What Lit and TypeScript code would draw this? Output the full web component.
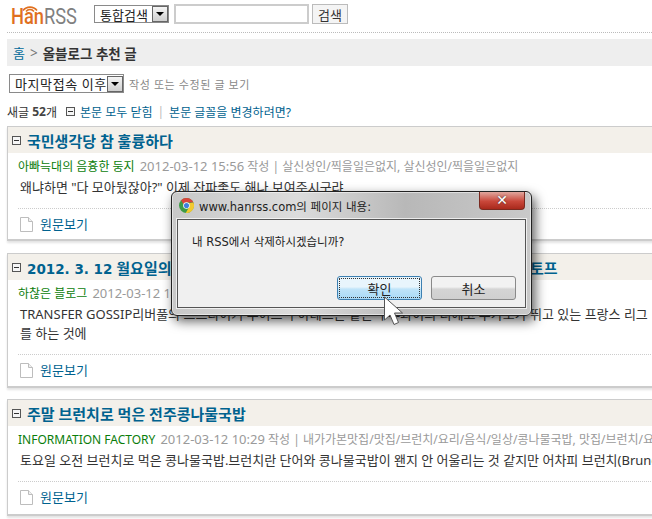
import { LitElement, html, css, svg } from "lit";
import { customElement } from "lit/decorators.js";

interface Post {
  lead?: string;
  title: string;
  src: string;
  date: string;
  tags: string;
  body: string[];
}

const POSTS: Post[] = [
  {
    title: "국민생각당 참 훌륭하다",
    src: "아빠늑대의 음흉한 둥지",
    date: "2012-03-12 15:56",
    tags: "살신성인/찍을일은없지, 살신성인/찍을일은없지",
    body: ['왜냐하면 "다 모아뒀잖아?" 이제 잔파좋도 해나 보여주시구랴'],
  },
  {
    lead: "2012. 3. 12",
    title: " 월요일의 해외축구 이적시장 소식 맨체스 리버풀 스트라이커 크리스토프",
    src: "하찮은 블로그",
    date: "2012-03-12 14:20",
    tags: "축구/해외축구, 축구",
    body: [
      "TRANSFER GOSSIP리버풀의 스트다이커 루이스 수아레스는 같은 우루과이의 디에고 루가노가 뛰고 있는 프랑스 리그",
      "를 하는 것에",
    ],
  },
  {
    title: "주말 브런치로 먹은 전주콩나물국밥",
    src: "INFORMATION FACTORY",
    date: "2012-03-12 10:29",
    tags: "내가가본맛집/맛집/브런치/요리/음식/일상/콩나물국밥, 맛집/브런치/요리",
    body: ["토요일 오전 브런치로 먹은 콩나물국밥.브런치란 단어와 콩나물국밥이 왠지 안 어울리는 것 같지만 어차피 브런치(Brunch)는"],
  },
];

const arrowBtn = html`<span class="arrow"><i></i></span>`;

const docIcon = svg`<svg class="doc" width="13" height="15" viewBox="0 0 13 15"><path d="M.5.5h8l4 4v10H.5z" fill="#fff" stroke="#bdbdbd"/><path d="M8.5.5v4h4" fill="#f0f0f0" stroke="#bdbdbd"/></svg>`;

const chrome = svg`<svg width="15" height="15" viewBox="0 0 20 20"><circle cx="10" cy="10" r="10" fill="#3d9b45"/><path d="M10 0a10 10 0 0 1 9.2 6H10a4 4 0 0 0-3.8 2.8L2.7 3A10 10 0 0 1 10 0z" fill="#d9453b"/><path d="M19.2 6A10 10 0 0 1 9 20l4.2-7.5A4 4 0 0 0 13 7z" fill="#f2c92f"/><circle cx="10" cy="10" r="4.4" fill="#fff"/><circle cx="10" cy="10" r="3.4" fill="#3f7fdc"/></svg>`;

const cursor = svg`<svg width="24" height="30" viewBox="0 0 24 30"><path d="M1.5 1v23l5.5-5 4 9.5 4.5-2-4-9.5h8z" fill="#fff" stroke="#555" stroke-width="1"/></svg>`;

@customElement("app-root")
export class AppRoot extends LitElement {
  static styles = css`
    :host {
      display: block;
      position: relative;
      width: 652px;
      height: 519px;
      overflow: hidden;
      background: #fff;
      font-family: "Noto Sans", "Noto Sans CJK KR", sans-serif;
      font-size: 12px;
      color: #333;
    }
    .page {
      width: 700px;
      padding: 0 0 0 7px;
      box-sizing: border-box;
    }
    .top {
      height: 33px;
      box-sizing: border-box;
      width: 645px;
      border-bottom: 1px dotted #bbb;
      display: flex;
      align-items: flex-start;
      padding-top: 4px;
    }
    .logo {
      width: 87px;
      height: 26px;
      flex: none;
      padding-left: 4px;
      box-sizing: border-box;
      position: relative;
      white-space: nowrap;
    }
    .logo span {
      display: block;
      font: 22px/26px Roboto, sans-serif;
      color: #808080;
      transform: scaleX(0.83);
      transform-origin: left center;
    }
    .logo b {
      font-weight: 500;
      color: #e0701f;
    }
    .logo svg {
      position: absolute;
      left: 15px;
      top: 0;
    }
    .select {
      display: inline-flex;
      align-items: center;
      justify-content: space-between;
      box-sizing: border-box;
      border: 1px solid #8a8a8a;
      background: #fff;
      color: #222;
      white-space: nowrap;
    }
    .s1 {
      width: 75px;
      height: 18px;
      padding-left: 5px;
      font-size: 13px;
      margin: 1px 5px 0 0;
    }
    .s2 {
      width: 115px;
      height: 19px;
      padding-left: 5px;
      font-size: 13px;
    }
    .arrow {
      width: 16px;
      height: 16px;
      background: linear-gradient(#f4f4f4, #cfcfcf);
      border: 1px solid #666;
      box-sizing: border-box;
      display: flex;
      align-items: center;
      justify-content: center;
      flex: none;
    }
    .arrow i {
      border: 4px solid transparent;
      border-top: 4px solid #000;
      border-bottom: 0;
    }
    input {
      width: 135px;
      height: 20px;
      border: 2px solid #ccc;
      box-sizing: border-box;
      margin: 0 3px 0 0;
      padding: 0;
    }
    .go {
      width: 36px;
      height: 20px;
      border: 1px solid #bbb;
      background: #f4f4f4;
      font: 13px "Noto Sans CJK KR", sans-serif;
      color: #333;
      padding: 0;
    }
    .crumb {
      margin-top: 6px;
      height: 27px;
      width: 645px;
      background: #eee;
      display: flex;
      align-items: center;
      padding-left: 6px;
      box-sizing: border-box;
      font-size: 13.5px;
      font-weight: 700;
      gap: 5px;
    }
    .crumb a {
      color: #006a9a;
      font-weight: 400;
      font-size: 13px;
    }
    .crumb .sep {
      font-weight: 400;
      color: #777;
    }
    .since {
      margin: 8px 0 0 2px;
      display: flex;
      align-items: center;
      gap: 5px;
      height: 19px;
      color: #888;
      font-size: 11px;
      letter-spacing: 0.6px;
    }
    .count {
      margin-top: 10px;
      height: 17px;
      display: flex;
      align-items: center;
      font-size: 12px;
      white-space: pre;
    }
    .count b {
      color: #444;
    }
    .count a {
      color: #00628f;
    }
    .count .bar {
      color: #bbb;
      margin: 0 5px;
    }
    .mini {
      width: 7px;
      height: 7px;
      border: 1px solid #555;
      background: #f6f6f6;
      position: relative;
      flex: none;
    }
    .mini::after {
      content: "";
      position: absolute;
      left: 1px;
      right: 1px;
      top: 3px;
      height: 1px;
      background: #333;
    }
    .count .mini {
      margin: 0 5px 0 9px;
    }
    .card {
      width: 720px;
      box-sizing: border-box;
      border: 1px solid #ccc;
      border-bottom-width: 2px;
      border-right: 0;
      box-shadow: 0 2px 2px #e4e4e4;
      display: flex;
      flex-direction: column;
    }
    .card.c0 {
      margin-top: 6px;
      height: 115px;
    }
    .card.c1 {
      margin-top: 12px;
      height: 135px;
    }
    .card.c2 {
      margin-top: 11px;
      height: 117px;
    }
    .c0 .foot {
      height: 31px;
    }
    .c1 .foot {
      height: 32px;
    }
    .c2 .foot {
      height: 33px;
    }
    .head {
      height: 26px;
      flex: none;
      background: #f3f0ea;
      display: flex;
      align-items: center;
      padding-left: 4px;
      gap: 6px;
      font-size: 15px;
      font-weight: 700;
      color: #00628f;
      white-space: pre;
    }
    .lead {
      font: 700 13.5px "DejaVu Sans", sans-serif;
    }
    .meta {
      padding: 4px 0 0 10px;
      height: 18px;
      flex: none;
      line-height: 18px;
      white-space: nowrap;
      color: #9a9a9a;
      font-size: 12px;
    }
    .meta .src {
      color: #0a7d0a;
      margin-right: 5px;
    }
    .meta .date {
      font-size: 13px;
    }
    .body {
      padding: 3px 0 0 12px;
      font-size: 13px;
      line-height: 19px;
      color: #333;
      white-space: nowrap;
    }
    .foot {
      margin: auto 0 0 10px;
      border-top: 1px dotted #ccc;
      box-sizing: border-box;
      padding: 6px 0 0 2px;
      display: flex;
      align-items: flex-start;
      gap: 7px;
      font-size: 13px;
      line-height: 18px;
      color: #00628f;
    }
    .doc {
      margin-top: 2px;
    }
    .dialog {
      position: absolute;
      left: 171px;
      top: 191px;
      width: 361px;
      height: 125px;
      box-sizing: border-box;
      border: 1px solid #222;
      border-radius: 6px;
      background: linear-gradient(90deg, #c8c8c8, #dcdcdc 35%, #b8b8b8 65%, #c9c9c9);
      box-shadow: 0 0 0 1px rgba(255, 255, 255, 0.5) inset, 3px 5px 12px rgba(0, 0, 0, 0.65);
      padding: 0 5px 7px;
      display: flex;
      flex-direction: column;
      font-family: "DejaVu Sans", "Noto Sans CJK KR", sans-serif;
    }
    .bar-t {
      height: 27px;
      flex: none;
      display: flex;
      align-items: center;
      gap: 5px;
      padding-left: 2px;
      font-size: 11.5px;
      color: #222;
      white-space: nowrap;
    }
    .close {
      position: absolute;
      right: 6px;
      top: 0;
      width: 46px;
      height: 18px;
      box-sizing: border-box;
      border: 1px solid #7a2a20;
      border-top: 0;
      border-radius: 0 0 4px 4px;
      background: linear-gradient(#e0a79e, #c9473a 55%, #a9291c);
      color: #fff;
      font: 700 14px/16px "DejaVu Sans", sans-serif;
      text-align: center;
      text-shadow: 0 0 2px #333;
    }
    .panel {
      flex: 1;
      background: #f0f0f0;
      border: 1px solid #555;
      box-shadow: 0 0 0 1px rgba(255, 255, 255, 0.7);
      display: flex;
      flex-direction: column;
      padding: 14px 9px 7px 14px;
    }
    .msg {
      font-size: 11.5px;
      color: #222;
      height: 16px;
      line-height: 16px;
    }
    .btns {
      margin-top: auto;
      display: flex;
      justify-content: flex-end;
      gap: 9px;
    }
    .btn {
      width: 85px;
      height: 24px;
      box-sizing: border-box;
      border: 1px solid #8a8a8a;
      border-radius: 3px;
      background: linear-gradient(#f2f2f2 45%, #d4d4d4 55%, #cfcfcf);
      font: 13px "Noto Sans CJK KR", sans-serif;
      color: #222;
      padding: 0;
    }
    .btn.ok {
      border-color: #3c7fb1;
      background: linear-gradient(#e8f5fc 45%, #bfe4f9 55%, #a9daf6);
      outline: 1px dotted #333;
      outline-offset: -3px;
    }
    .cursor {
      position: absolute;
      left: 383px;
      top: 296px;
      line-height: 0;
    }
  `;

  private card(p: Post, i: number) {
    return html`<section class="card c${i}">
      <div class="head">
        <span class="mini"></span>
        <span>${p.lead ? html`<span class="lead">${p.lead}</span>` : ""}${p.title}</span>
      </div>
      <div class="meta"><span class="src">${p.src}</span><span class="date">${p.date}</span> 작성 | ${p.tags}</div>
      <div class="body">${p.body.map((l) => html`<div>${l}</div>`)}</div>
      <div class="foot">${docIcon}<span>원문보기</span></div>
    </section>`;
  }

  render() {
    return html`
      <div class="page">
        <header class="top">
          <div class="logo">
            <svg width="16" height="8" viewBox="0 0 16 8" fill="none" stroke="#e0701f" stroke-width="1.6"><path d="M1 6.5a9 9 0 0 1 14 0M4 7.5a5 5 0 0 1 8 0"/></svg>
            <span><b>Han</b>RSS</span>
          </div>
          <span class="select s1">통합검색${arrowBtn}</span>
          <input type="text" />
          <button class="go">검색</button>
        </header>
        <nav class="crumb"><a>홈</a><span class="sep">&gt;</span><span>올블로그 추천 글</span></nav>
        <div class="since"><span class="select s2">마지막접속 이후${arrowBtn}</span>작성 또는 수정된 글 보기</div>
        <div class="count">새글 <b>52</b>개<span class="mini"></span><a>본문 모두 닫힘</a><span class="bar">|</span><a>본문 글꼴을 변경하려면?</a></div>
        ${POSTS.map((p, i) => this.card(p, i))}
      </div>
      <div class="dialog">
        <div class="bar-t">${chrome}<span>www.hanrss.com의 페이지 내용:</span></div>
        <div class="close">✕</div>
        <div class="panel">
          <div class="msg">내 RSS에서 삭제하시겠습니까?</div>
          <div class="btns">
            <button class="btn ok">확인</button>
            <button class="btn">취소</button>
          </div>
        </div>
      </div>
      <div class="cursor">${cursor}</div>
    `;
  }
}
